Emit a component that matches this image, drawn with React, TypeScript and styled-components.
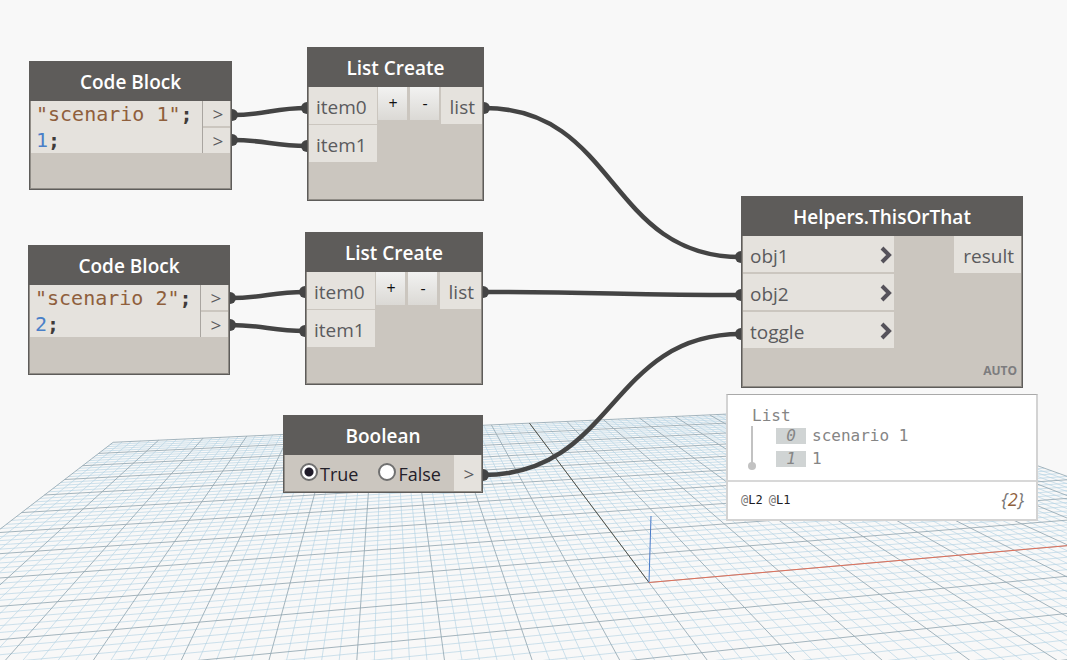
import React, { useState } from "react";
import styled, { createGlobalStyle, css } from "styled-components";

const GlobalStyle = createGlobalStyle`
  * { box-sizing: border-box; }
  body { margin: 0; background: #f8f8f8; }
`;

const MONO = `"DejaVu Sans Mono", "Liberation Mono", monospace`;
const SANS = `"Open Sans", "Noto Sans", sans-serif`;

/* ---------- workspace ---------- */

const Workspace = styled.main`
  position: relative;
  width: 100%;
  height: 100vh;
  min-height: 540px;
  overflow: hidden;
  background: #f8f8f8;
  font-family: ${SANS};
`;

const Layer = styled.svg`
  position: absolute;
  inset: 0;
  width: 100%;
  height: 100%;
`;

/* ---------- ground grid, seen in perspective ---------- */

const EXTENT = 10;
const NEAR = -6;
const STEPS = 5;

const project = (u: number, v: number) => {
  const depth = 1 + 0.0172 * u + 0.0835 * v;
  const x = (649 + 78.35 * u + 32.26 * v) / depth;
  const y = (582.5 + 4.1 * u + 19.4 * v) / depth;
  return `${x.toFixed(1)} ${y.toFixed(1)}`;
};

const segment = (u1: number, v1: number, u2: number, v2: number) =>
  `M${project(u1, v1)}L${project(u2, v2)}`;

const gridPath = (major: boolean) => {
  let d = "";
  for (let i = -EXTENT * STEPS; i <= EXTENT * STEPS; i++) {
    if ((i % STEPS === 0) !== major) continue;
    const k = i / STEPS;
    d += segment(k, NEAR, k, EXTENT);
    if (k >= NEAR) d += segment(-EXTENT, k, EXTENT, k);
  }
  return d;
};

const minorLines = gridPath(false);
const majorLines = gridPath(true);

const Grid = () => (
  <Layer aria-hidden="true" fill="none">
    <path d={minorLines} stroke="#b4d3e3" strokeOpacity="0.65" />
    <path d={majorLines} stroke="#94a8b3" strokeOpacity="0.85" />
    <path d={segment(0, 0, 0, EXTENT)} stroke="#55554c" />
    <path d={segment(0, 0, EXTENT, 0)} stroke="#e0705a" />
    <path d="M649 582L651 516" stroke="#4a7ac8" />
  </Layer>
);

/* ---------- wires ---------- */

type Wire = [number, number, number, number];

const wires: Wire[] = [
  [232, 115, 307, 108],
  [232, 140, 307, 146],
  [484, 108, 741, 257],
  [230, 298, 305, 292],
  [230, 325, 305, 331],
  [483, 292, 741, 295],
  [483, 475, 741, 334],
];

const Wires = () => (
  <Layer aria-hidden="true">
    {wires.map(([x1, y1, x2, y2]) => {
      const bend = Math.hypot(x2 - x1, y2 - y1) * 0.45;
      return (
        <g key={`${x1}-${y1}`} fill="#444444">
          <path
            d={`M${x1} ${y1}C${x1 + bend} ${y1} ${x2 - bend} ${y2} ${x2} ${y2}`}
            fill="none"
            stroke="#444444"
            strokeWidth="4.5"
          />
          <circle cx={x1} cy={y1} r="6" />
          <circle cx={x2} cy={y2} r="6" />
        </g>
      );
    })}
  </Layer>
);

/* ---------- nodes ---------- */

const NodeBox = styled.section<{ $x: number; $y: number; $w: number; $h: number }>`
  position: absolute;
  left: ${(p) => p.$x}px;
  top: ${(p) => p.$y}px;
  width: ${(p) => p.$w}px;
  min-height: ${(p) => p.$h}px;
  display: flex;
  flex-direction: column;
  padding-bottom: 1px;
  background: #cbc6bf;
  border: 1px solid #5e5c5a;
  box-shadow: inset 0 0 0 1px #918d87;
`;

const Title = styled.h2`
  margin: 0;
  height: 39px;
  background: #5e5c5a;
  color: #ffffff;
  font-size: 19px;
  font-weight: 600;
  line-height: 41px;
  text-align: center;
`;

const Body = styled.div`
  flex: 1;
  display: flex;
  align-items: flex-start;
  padding: 0 1px;
`;

const PortColumn = styled.div<{ $gap: number; $width?: number; $end?: boolean }>`
  display: flex;
  flex-direction: column;
  flex: none;
  gap: ${(p) => p.$gap}px;
  ${(p) => p.$width && css`width: ${p.$width}px;`}
  ${(p) => p.$end && css`margin-left: auto;`}
`;

const portPadding = {
  input: "2px 7px 0",
  level: "4px 1px 0 7px",
  output: "2px 7px 0 9px",
};

const Port = styled.div<{ $kind: keyof typeof portPadding }>`
  display: flex;
  align-items: center;
  justify-content: space-between;
  height: ${(p) => (p.$kind === "level" ? 36 : 37)}px;
  padding: ${(p) => portPadding[p.$kind]};
  background: #e5e2dd;
  color: #5b5b5d;
  font-size: 19px;
  line-height: 26px;
`;

const CodePort = styled.div`
  display: flex;
  align-items: center;
  justify-content: center;
  width: 27px;
  height: 25px;
  padding: 1px 0 0 3px;
  background: #e5e2dd;
  color: #5b5b5d;
  font-size: 19px;
  line-height: 24px;
`;

const Code = styled.pre`
  flex: 1;
  margin: 0;
  height: 52px;
  padding-left: 5px;
  border-right: 1px solid #a9a5a0;
  background: #e5e2dd;
  color: #3f3b39;
  font-family: ${MONO};
  font-size: 20px;
  font-weight: 700;
  line-height: 26px;
`;

const Str = styled.span`
  color: #8f5f3c;
  font-weight: 400;
`;

const Num = styled.span`
  color: #4a7fc8;
  font-weight: 400;
`;

const ButtonPair = styled.div`
  display: flex;
  gap: 3px;
  margin-left: 1px;
`;

const StepButton = styled.button`
  width: 29px;
  height: 33px;
  padding: 0 0 0 1px;
  border: 0;
  background: linear-gradient(#f2f2f1, #dbd9d5);
  color: #111111;
  font-family: ${SANS};
  font-size: 16px;
  line-height: 33px;
`;

const BooleanBody = styled(Body)`
  align-items: stretch;
`;

const Options = styled.div`
  flex: 1;
  display: flex;
  align-items: center;
  gap: 20px;
  padding: 2px 0 0 15px;
`;

const Option = styled.label`
  display: flex;
  align-items: center;
  gap: 2px;
  color: #232029;
  font-size: 18px;
  line-height: 24px;
`;

const Radio = styled.input`
  appearance: none;
  flex: none;
  width: 18px;
  height: 18px;
  margin: 0 0 4px;
  border: 2px solid #707070;
  border-radius: 50%;
  background: #ffffff;
  &:checked {
    background: radial-gradient(circle, #1f1b29 4px, #ffffff 5px);
  }
`;

const OutPort = styled(CodePort)`
  height: auto;
`;

const Lacing = styled.div`
  padding: 0 5px 7px;
  color: #7c7c7e;
  font-size: 12px;
  font-weight: 700;
  line-height: 16px;
  text-align: right;
`;

/* ---------- preview bubble ---------- */

const Preview = styled.section`
  position: absolute;
  left: 726px;
  top: 394px;
  width: 312px;
  border: 2px solid #d3d3d3;
  border-top: 1px solid #a9a9a9;
  background: #ffffff;
`;

const PreviewTree = styled.div`
  height: 87px;
  padding: 11px 24px 0;
  border-bottom: 2px solid #d8d8d8;
  color: #858585;
  font-family: ${MONO};
  font-size: 16px;
  line-height: 20px;
`;

const Branch = styled.div`
  position: relative;
  height: 40px;
  margin-left: -1px;
  border-left: 2px solid #c2c2c2;
  &::after {
    content: "";
    position: absolute;
    left: -5px;
    bottom: -4px;
    width: 8px;
    height: 8px;
    border-radius: 50%;
    background: #c2c2c2;
  }
`;

const Items = styled.ul`
  display: flex;
  flex-direction: column;
  gap: 3px;
  margin: 0;
  padding: 0 0 0 23px;
  list-style: none;
`;

const Item = styled.li`
  display: flex;
  align-items: center;
  gap: 6px;
  line-height: 20px;
`;

const Index = styled.span`
  width: 30px;
  height: 16px;
  background: #d0d4d4;
  font-style: italic;
  line-height: 16px;
  text-align: center;
`;

const PreviewFooter = styled.footer`
  display: flex;
  align-items: center;
  justify-content: space-between;
  height: 37px;
  padding: 0 12px 2px 13px;
  color: #777777;
`;

const Levels = styled.div`
  display: flex;
  gap: 6px;
  font-family: ${MONO};
  font-size: 12px;
  b {
    color: #1c1c24;
    font-weight: 400;
  }
`;

const Count = styled.span`
  font-size: 18px;
  font-style: italic;
  line-height: 24px;
  padding-bottom: 2px;
  b {
    color: #8f5f3c;
    font-weight: 400;
  }
`;

const Chevron = () => (
  <svg width="13" height="20" viewBox="0 0 13 20" aria-hidden="true">
    <path d="M2 2L9 9L2 16" fill="none" stroke="#55525a" strokeWidth="4" />
  </svg>
);

type Place = { x: number; y: number; w: number; h: number };

const CodeBlock = ({ x, y, w, h, n }: Place & { n: number }) => (
  <NodeBox $x={x} $y={y} $w={w} $h={h}>
    <Title>Code Block</Title>
    <Body>
      <Code>
        <Str>{`"scenario ${n}"`}</Str>;{"\n"}
        <Num>{n}</Num>;
      </Code>
      <PortColumn $gap={2}>
        <CodePort>&gt;</CodePort>
        <CodePort>&gt;</CodePort>
      </PortColumn>
    </Body>
  </NodeBox>
);

const ListCreate = ({ x, y, w, h }: Place) => (
  <NodeBox $x={x} $y={y} $w={w} $h={h}>
    <Title>List Create</Title>
    <Body>
      <PortColumn $gap={1} $width={68}>
        <Port $kind="input">item0</Port>
        <Port $kind="input">item1</Port>
      </PortColumn>
      <ButtonPair>
        <StepButton type="button">+</StepButton>
        <StepButton type="button">-</StepButton>
      </ButtonPair>
      <PortColumn $gap={1} $end>
        <Port $kind="output">list</Port>
      </PortColumn>
    </Body>
  </NodeBox>
);

const BooleanNode = () => {
  const [value, setValue] = useState(true);
  return (
    <NodeBox $x={283} $y={415} $w={200} $h={78}>
      <Title>Boolean</Title>
      <BooleanBody>
        <Options>
          <Option>
            <Radio type="radio" name="toggle" checked={value} onChange={() => setValue(true)} />
            True
          </Option>
          <Option>
            <Radio type="radio" name="toggle" checked={!value} onChange={() => setValue(false)} />
            False
          </Option>
        </Options>
        <OutPort>&gt;</OutPort>
      </BooleanBody>
    </NodeBox>
  );
};

const HelperNode = () => (
  <NodeBox $x={741} $y={196} $w={282} $h={192}>
    <Title>Helpers.ThisOrThat</Title>
    <Body>
      <PortColumn $gap={2} $width={151}>
        {["obj1", "obj2", "toggle"].map((name) => (
          <Port key={name} $kind="level">
            {name}
            <Chevron />
          </Port>
        ))}
      </PortColumn>
      <PortColumn $gap={2} $end>
        <Port $kind="output">result</Port>
      </PortColumn>
    </Body>
    <Lacing>AUTO</Lacing>
  </NodeBox>
);

const ResultPreview = () => (
  <Preview>
    <PreviewTree>
      List
      <Branch>
        <Items>
          {["scenario 1", "1"].map((text, i) => (
            <Item key={text}>
              <Index>{i}</Index>
              {text}
            </Item>
          ))}
        </Items>
      </Branch>
    </PreviewTree>
    <PreviewFooter>
      <Levels>
        <span>@<b>L2</b></span>
        <span>@<b>L1</b></span>
      </Levels>
      <Count>{"{"}<b>2</b>{"}"}</Count>
    </PreviewFooter>
  </Preview>
);

export default function App() {
  return (
    <>
      <GlobalStyle />
      <Workspace>
        <Grid />
        <Wires />
        <CodeBlock x={29} y={61} w={203} h={129} n={1} />
        <ListCreate x={307} y={47} w={177} h={154} />
        <CodeBlock x={28} y={245} w={202} h={130} n={2} />
        <ListCreate x={305} y={232} w={178} h={153} />
        <BooleanNode />
        <HelperNode />
        <ResultPreview />
      </Workspace>
    </>
  );
}
